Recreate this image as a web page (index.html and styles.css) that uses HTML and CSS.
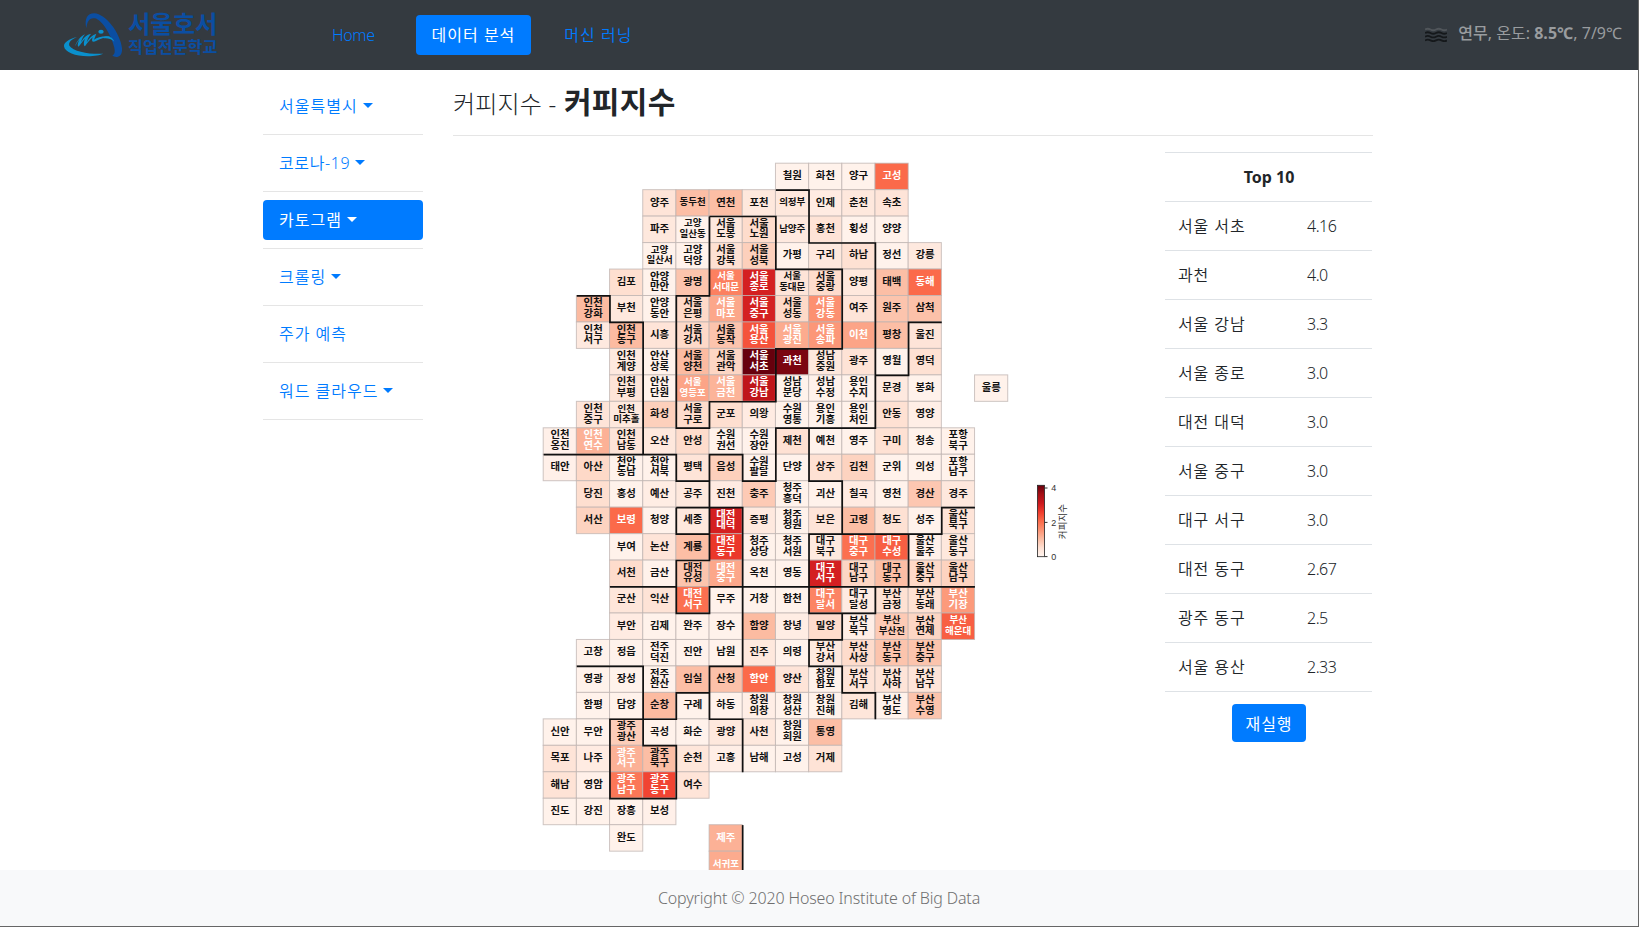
FILE: index.html
```html
<!DOCTYPE html>
<html lang="ko">
<head>
<meta charset="utf-8">
<title>커피지수</title>
<link rel="stylesheet" href="styles.css">
</head>
<body>
<header class="navbar">
  <svg class="logo" viewBox="0 0 510 180" width="170" height="60">
    <path class="logo-blue" d="M94 70C88 42 96 25 118 25C152 27 196 84 201 130C202 145 197 154 187 156C180 157 175 154 172 151C180 148 180 140 178 128C170 95 144 46 120 40C103 37 97 48 94 70Z"/>
    <path class="logo-cyan" d="M66 96C42 102 26 112 27 124C29 142 62 154 98 154C120 153 134 151 145 146C110 149 54 140 43 122C40 113 48 103 66 96Z"/>
    <path class="logo-cyan" d="M60 124C66 108 78 92 90 88C82 98 80 106 78 112C84 100 96 88 108 86C100 96 97 104 95 112C102 100 112 90 124 86L117 104C128 96 146 92 166 95C150 97 134 101 123 108C113 113 108 110 113 97C104 104 97 114 90 124C85 122 86 110 90 101C81 109 76 120 70 125C66 122 70 110 74 103C68 110 64 118 60 124Z"/>
    <path class="logo-cyan" d="M146 96C162 92 174 98 178 110C168 101 158 99 146 100Z"/>
    <ellipse class="logo-cyan" cx="138" cy="80" rx="8" ry="6"/>
    <text class="logo-name" x="219" y="83" textLength="268" lengthAdjust="spacingAndGlyphs">서울호서</text>
    <text class="logo-sub" x="219" y="143" textLength="268" lengthAdjust="spacingAndGlyphs">직업전문학교</text>
  </svg>
  <nav class="menu">
    <a class="pill home">Home</a>
    <a class="pill active">데이터 분석</a>
    <a class="pill">머신 러닝</a>
  </nav>
  <div class="weather">
    <svg class="mist" viewBox="0 0 22 15" width="22" height="15">
      <path class="mist-top" d="M0 2.500q2.750-1.500 5.500 0t5.500 0t5.500 0t5.500 0"/>
      <path d="M0 6q2.750-1.500 5.500 0t5.500 0t5.500 0t5.500 0M0 9.700q2.750-1.500 5.500 0t5.500 0t5.500 0t5.500 0M0 13.400q2.750-1.500 5.500 0t5.500 0t5.500 0t5.500 0"/>
    </svg>
    <span class="weather-text"><b class="sky">연무</b>, 온도: <b>8.5℃</b>, 7/9℃</span>
  </div>
</header>
<div class="page">
  <aside class="sidebar">
    <a class="pill">서울특별시<i class="caret"></i></a><hr>
    <a class="pill"><span class="covid">코로나-19</span><i class="caret"></i></a><hr>
    <a class="pill active">카토그램<i class="caret"></i></a><hr>
    <a class="pill">크롤링<i class="caret"></i></a><hr>
    <a class="pill">주가 예측</a><hr>
    <a class="pill">워드 클라우드<i class="caret"></i></a><hr>
  </aside>
  <main class="main">
    <h1 class="title">커피지수 - <b>커피지수</b></h1>
    <div class="content">
      <svg class="map" id="map" viewBox="453 152 712 718" width="712" height="718"></svg>
      <section class="ranking">
        <table class="top">
          <colgroup><col class="place"><col></colgroup>
          <thead><tr><th colspan="2">Top 10</th></tr></thead>
          <tbody>
            <tr><td>서울 서초</td><td>4.16</td></tr>
            <tr><td>과천</td><td>4.0</td></tr>
            <tr><td>서울 강남</td><td>3.3</td></tr>
            <tr><td>서울 종로</td><td>3.0</td></tr>
            <tr><td>대전 대덕</td><td>3.0</td></tr>
            <tr><td>서울 중구</td><td>3.0</td></tr>
            <tr><td>대구 서구</td><td>3.0</td></tr>
            <tr><td>대전 동구</td><td>2.67</td></tr>
            <tr><td>광주 동구</td><td>2.5</td></tr>
            <tr><td>서울 용산</td><td>2.33</td></tr>
          </tbody>
        </table>
        <button class="rerun">재실행</button>
      </section>
    </div>
  </main>
</div>
<footer class="footer">Copyright © 2020 Hoseo Institute of Big Data</footer>
<script src="map.js"></script>
</body>
</html>
```
FILE: styles.css
```css
* { box-sizing: border-box; }
body {
  margin: 0;
  height: 927px;
  display: flex;
  flex-direction: column;
  overflow: hidden;
  border-right: 1px solid #666;
  border-bottom: 1px solid #666;
  background: #fff;
  color: #212529;
  font-family: "Noto Sans", "Noto Sans CJK KR", sans-serif;
  font-size: 16px;
  line-height: 24px;
}
.navbar {
  height: 70px;
  flex: none;
  display: flex;
  align-items: center;
  padding: 0 16px 0 55px;
  background: #343a40;
}
.logo-blue, .logo-name, .logo-sub { fill: #0b4ea2; }
.logo-cyan { fill: #0a90cd; }
.logo-name, .logo-sub { font-family: "Liberation Sans", "Noto Sans CJK KR", sans-serif; font-weight: 700; }
.logo-name { font-size: 73px; }
.logo-sub { font-size: 48px; }
.menu { display: flex; gap: 17px; margin-left: 91px; }
.pill {
  display: block;
  height: 40px;
  padding: 8px 16px;
  border-radius: 4px;
  color: #007bff;
  letter-spacing: 1px;
  white-space: nowrap;
  font-weight: 350;
}
.home { letter-spacing: -.4px; margin-right: 8px; }
.covid { letter-spacing: .6px; }
.active { background: #007bff; color: #fff; font-weight: 400; }
.weather {
  display: flex;
  align-items: center;
  gap: 11px;
  margin-left: auto;
  margin-top: -4px;
  color: #999c9f;
}
.mist { fill: none; stroke: #15181b; stroke-width: 1.8; margin-top: 3px; }
.mist-top { stroke: #50555a; }
.weather-text { letter-spacing: .03px; }
.sky { font-weight: 500; }
.page { flex: 1; min-height: 0; display: flex; overflow: hidden; }
.sidebar { width: 160px; margin-left: 263px; padding-top: 16px; }
.sidebar hr { height: 1px; margin: 8px 0; border: 0; background: #e5e5e5; }
.caret {
  display: inline-block;
  margin-left: 5px;
  vertical-align: 4px;
  border: 5px solid transparent;
  border-top-color: currentColor;
  border-bottom: 0;
}
.main { width: 920px; margin-left: 30px; }
.title {
  height: 66px;
  margin: 0 0 16px;
  padding-top: 13px;
  border-bottom: 1px solid #e5e5e5;
  font-size: 24px;
  font-weight: 300;
  line-height: 38px;
  letter-spacing: .2px;
}
.title b { font-size: 30px; font-weight: 700; letter-spacing: .3px; margin-left: 1px; }
.content { display: flex; }
.map { flex: none; display: block; }
.map text { font-family: "Liberation Sans", "Noto Sans CJK KR", sans-serif; text-anchor: middle; }
.cell { stroke: #bdb3b0; stroke-width: 1; stroke-opacity: .75; }
.name { font-weight: 700; fill: #111; }
.name.light { fill: #fff; }
.border { fill: none; stroke: #111; stroke-width: 1.7; }
.bar { stroke: #222; stroke-width: .8; }
.tick { stroke: #333; stroke-width: 1; }
.scale { font-size: 9px; fill: #333; }
.caption { font-size: 9.6px; fill: #333; }
.ranking { width: 207px; text-align: center; }
.top { width: 100%; border-collapse: collapse; border-bottom: 1px solid #dee2e6; text-align: left; table-layout: fixed; }
.place { width: 129px; }
.top tr { height: 49px; }
.top th, .top td { padding: 0 0 0 13px; border-top: 1px solid #dee2e6; }
.top th { text-align: center; padding: 0 0 0 1px; letter-spacing: 0; }
.top td { font-weight: 350; }
.top td:first-child { letter-spacing: .9px; }
.top td:last-child { letter-spacing: -.5px; }
.rerun {
  width: 74px;
  height: 38px;
  margin: 12px 0 0 1px;
  padding: 0;
  border: 0;
  border-radius: 4px;
  background: #007bff;
  color: #fff;
  font: 400 16px "Noto Sans CJK KR", sans-serif;
  letter-spacing: 1px;
}
.footer {
  flex: none;
  height: 56px;
  padding-top: 16px;
  background: #f8f9fa;
  color: #6f6f6f;
  text-align: center;
  font-weight: 350;
  letter-spacing: -.15px;
}
```
FILE: map.js
```js
// Each row: first column, then "name:intensity"; "_" splits a name over two lines.
const rows = [
  [7, '철원:2 화천:2 양구:2 고성:50'],
  [3, '양주:10 동두천:24 연천:24 포천:8 의정부:8 인제:6 춘천:8 속초:10'],
  [3, '파주:8 고양_일산동:2 서울_도봉:8 서울_노원:14 남양주:7 홍천:11 횡성:2 양양:2'],
  [3, '고양_일산서:2 고양_덕양:2 서울_강북:12 서울_성북:18 가평:2 구리:8 하남:12 정선:2 강릉:7'],
  [2, '김포:13 안양_만안:2 광명:22 서울_서대문:43 서울_종로:72 서울_동대문:10 서울_중랑:14 양평:8 태백:24 동해:50'],
  [1, '인천_강화:25 부천:8 안양_동안:2 서울_은평:15 서울_마포:31 서울_중구:72 서울_성동:15 서울_강동:38 여주:10 원주:22 삼척:23'],
  [1, '인천_서구:7 인천_동구:25 시흥:10 서울_강서:15 서울_동작:22 서울_용산:56 서울_광진:30 서울_송파:36 이천:32 평창:24 울진:10'],
  [2, '인천_계양:7 안산_상록:2 서울_양천:25 서울_관악:16 서울_서초:100 과천:96 성남_중원:8 광주:11 영월:2 영덕:12'],
  [2, '인천_부평:10 안산_단원:2 서울_영등포:32 서울_금천:27 서울_강남:79 성남_분당:2 성남_수정:2 용인_수지:2 문경:7 봉화:2 - 울릉:2'],
  [1, '인천_중구:10 인천_미추홀:8 화성:18 서울_구로:14 군포:13 의왕:6 수원_영통:2 용인_기흥:2 용인_처인:2 안동:12 영양:4'],
  [0, '인천_옹진:3 인천_연수:28 인천_남동:10 오산:8 안성:14 수원_권선:2 수원_장안:2 제천:12 예천:2 영주:2 구미:12 청송:2 포항_북구:2'],
  [0, '태안:3 아산:15 천안_동남:2 천안_서북:2 평택:10 음성:18 수원_팔달:2 단양:2 상주:12 김천:17 군위:2 의성:2 포항_남구:2'],
  [1, '당진:13 홍성:2 예산:5 공주:8 진천:6 충주:20 청주_흥덕:2 괴산:2 칠곡:6 영천:2 경산:21 경주:8'],
  [1, '서산:17 보령:50 청양:2 세종:8 대전_대덕:72 증평:7 청주_청원:2 보은:10 고령:24 청도:12 성주:2 울산_북구:10'],
  [2, '부여:2 논산:10 계룡:24 대전_동구:64 청주_상당:2 청주_서원:2 대구_북구:7 대구_중구:48 대구_수성:53 울산_울주:3 울산_동구:8'],
  [2, '서천:14 금산:2 대전_유성:22 대전_중구:31 옥천:2 영동:2 대구_서구:72 대구_남구:16 대구_동구:24 울산_중구:15 울산_남구:17'],
  [2, '군산:9 익산:11 대전_서구:48 무주:2 거창:2 합천:2 대구_달서:42 대구_달성:6 부산_금정:12 부산_동래:12 부산_기장:35'],
  [2, '부안:6 김제:2 완주:2 장수:2 함양:25 창녕:5 밀양:14 부산_북구:4 부산_부산진:20 부산_연제:16 부산_해운대:53'],
  [1, '고창:2 정읍:2 전주_덕진:2 진안:2 남원:2 진주:8 의령:2 부산_강서:7 부산_사상:14 부산_동구:22 부산_중구:22'],
  [1, '영광:2 장성:2 전주_완산:2 임실:24 산청:23 함안:50 양산:10 창원_합포:2 부산_서구:10 부산_사하:10 부산_남구:10'],
  [1, '함평:2 담양:2 순창:25 구례:2 하동:2 창원_의창:4 창원_성산:2 창원_진해:2 김해:9 부산_영도:2 부산_수영:22'],
  [0, '신안:2 무안:2 광주_광산:19 곡성:2 화순:2 광양:8 사천:8 창원_회원:2 통영:24'],
  [0, '목포:10 나주:6 광주_서구:28 광주_북구:24 순천:9 고흥:4 남해:2 고성:2 거제:11'],
  [0, '해남:11 영암:3 광주_남구:46 광주_동구:60 여수:10'],
  [0, '진도:2 강진:2 장흥:2 보성:3'],
  [2, '완도:2 - - 제주:28'],
  [5, '서귀포:30']
];

// Province outlines as column,row corner points.
const borders = [
  '7,1 8,1 8,3 10,3 10,10 7,10 7,12 6,12 6,11 5,11 5,13',
  '12,6 11,6 11,8 10,8',
  '5,2 7,2 7,4 9,4 9,7 7,7 7,9 5,9 5,10 4,10 4,5 5,5 5,2',
  '1,5 2,5 2,6 3,6 3,11',
  '0,11 4,11 4,12 5,12',
  '8,10 8,12 9,12 9,14',
  '4,13 6,13 6,19 5,19 5,21 6,21 6,23',
  '4,13 4,14 5,14',
  '5,13 5,15 4,15 4,17 5,17 5,16 13,16',
  '2,16 4,16',
  '13,13 12,13 12,14 8,14 8,17 10,17 10,16',
  '11,14 11,16',
  '9,17 9,18 8,18 8,19 9,19 9,20 10,20 10,21',
  '1,19 3,19 3,22 4,22 4,24 2,24 2,21 4,21 4,20 5,20',
  '6,25 6,27'
];

const reds = ['fff5f0', 'fee0d2', 'fcbba1', 'fc9272', 'fb6a4a', 'ef3b2c', 'cb181d', 'a50f15', '67000d'];
const channels = hex => [0, 2, 4].map(i => parseInt(hex.substr(i, 2), 16));
function shade(t) {
  const p = Math.min(t * 8, 7.9999), i = Math.floor(p);
  const a = channels(reds[i]), b = channels(reds[i + 1]);
  return `rgb(${a.map((v, k) => Math.round(v + (b[k] - v) * (p - i))).join(',')})`;
}

const X0 = 543.2, Y0 = 163.2, W = 33.18, H = 26.46;
let cells = '', names = '';
rows.forEach(([start, list], r) => list.split(' ').forEach((item, i) => {
  if (item === '-') return;
  const [name, value] = item.split(':');
  const x = X0 + (start + i) * W, y = Y0 + r * H;
  cells += `<rect class="cell" x="${x}" y="${y}" width="${W}" height="${H}" fill="${shade(value / 100)}"/>`;
  const lines = name.split('_');
  const size = lines.some(l => l.length > 2) ? 9.5 : 10.4;
  const cx = x + W / 2 + 0.2, cy = y + H / 2 - 1.2;
  const spans = lines.map((line, k) => {
    const by = cy + size * 0.37 + (lines.length > 1 ? (k - 0.5) * 10.6 : 0);
    return `<tspan x="${cx}" y="${by}">${line}</tspan>`;
  }).join('');
  names += `<text class="name${value > 26 ? ' light' : ''}" font-size="${size}">${spans}</text>`;
}));
const outlines = borders.map(b => `<polyline class="border" points="${
  b.split(' ').map(p => { const [c, r] = p.split(','); return `${X0 + 0.4 + c * W},${Y0 + 0.4 + r * H}`; }).join(' ')}"/>`).join('');
const stops = reds.map((c, i) => `<stop offset="${i / 8}" stop-color="#${c}"/>`).join('');
const ticks = [[4, 488], [2, 522.4], [0, 556.6]].map(([n, y]) =>
  `<path class="tick" d="M1044.5 ${y}h3"/><text class="scale" x="1053.7" y="${y + 3.3}">${n}</text>`).join('');
document.getElementById('map').innerHTML =
  `<defs><linearGradient id="reds" x1="0" y1="1" x2="0" y2="0">${stops}</linearGradient></defs>` +
  cells + outlines + names +
  `<rect class="bar" x="1037.5" y="485.3" width="7" height="71.4" fill="url(#reds)"/>` + ticks +
  `<text class="caption" transform="translate(1066 521.5) rotate(-90)">커피지수</text>`;
```
